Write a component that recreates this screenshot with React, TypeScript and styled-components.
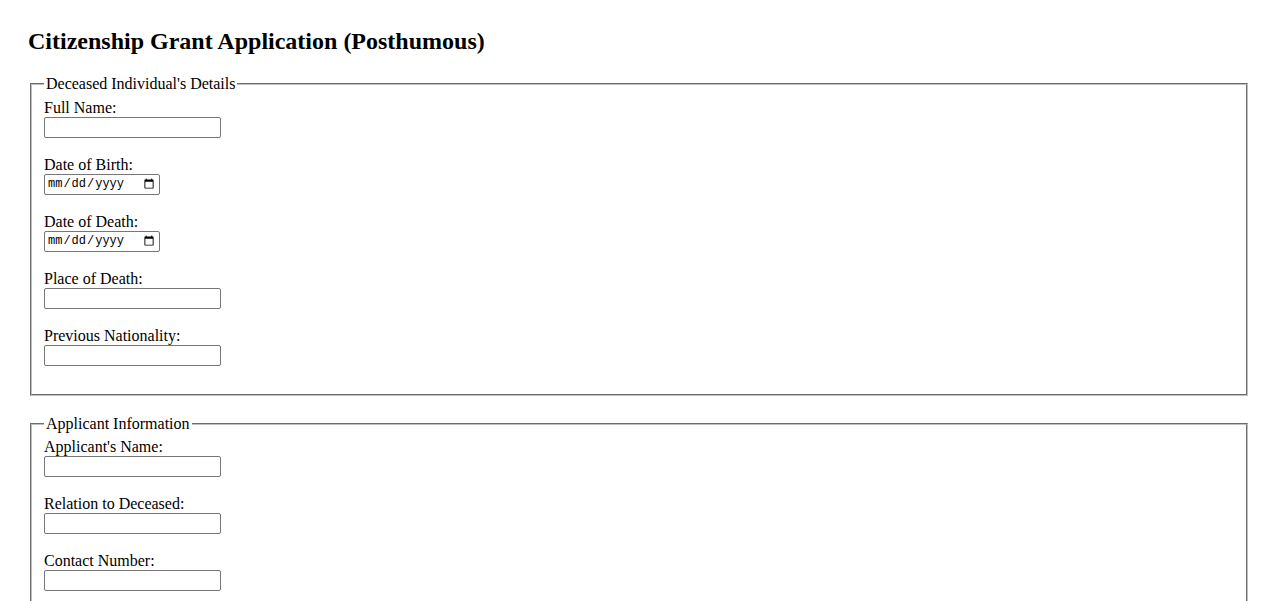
import React from 'react';
import styled, { createGlobalStyle } from 'styled-components';

const GlobalStyle = createGlobalStyle`
  html, body {
    margin: 0;
    padding: 0;
    background: #ffffff;
  }
  body {
    font-family: 'Liberation Serif', 'Times New Roman', serif;
    font-size: 16px;
    color: #000000;
  }
`;

interface Field {
  id: string;
  label: string;
  type: 'text' | 'date' | 'tel' | 'email';
}

const deceasedFields: Field[] = [
  { id: 'fullName', label: 'Full Name:', type: 'text' },
  { id: 'dob', label: 'Date of Birth:', type: 'date' },
  { id: 'dod', label: 'Date of Death:', type: 'date' },
  { id: 'placeOfDeath', label: 'Place of Death:', type: 'text' },
  { id: 'prevNationality', label: 'Previous Nationality:', type: 'text' },
];

const applicantFields: Field[] = [
  { id: 'applicantName', label: "Applicant's Name:", type: 'text' },
  { id: 'relation', label: 'Relation to Deceased:', type: 'text' },
  { id: 'contact', label: 'Contact Number:', type: 'tel' },
  { id: 'email', label: 'Email Address:', type: 'email' },
];

const App: React.FC = () => {
  return (
    <Page>
      <GlobalStyle />
      <Title>Citizenship Grant Application (Posthumous)</Title>
      <Form onSubmit={(e) => e.preventDefault()}>
        <Section>
          <Legend>Deceased Individual's Details</Legend>
          {deceasedFields.map((f) => (
            <FieldRow key={f.id}>
              <Label htmlFor={f.id}>{f.label}</Label>
              {f.type === 'date' ? <DateInput id={f.id} type="date" /> : <TextInput id={f.id} type={f.type} />}
            </FieldRow>
          ))}
        </Section>

        <Section>
          <Legend>Applicant Information</Legend>
          {applicantFields.map((f) => (
            <FieldRow key={f.id}>
              <Label htmlFor={f.id}>{f.label}</Label>
              <TextInput id={f.id} type={f.type} />
            </FieldRow>
          ))}
        </Section>

        <SubmitButton type="submit">Submit Application</SubmitButton>
      </Form>
    </Page>
  );
};

const Page = styled.div`
  padding: 28px 28px 20px 28px;
`;

const Title = styled.h2`
  margin: 0 0 19.92px 0;
  font-size: 24px;
  font-weight: 700;
  line-height: normal;
`;

const Form = styled.form`
  display: flex;
  flex-direction: column;
  gap: 19px;
  align-items: stretch;
`;

const Section = styled.fieldset`
  margin: 0 2px;
  padding: 5.6px 12px 10px 12px;
  border: 2px groove rgb(192, 192, 192);
  min-width: 0;
`;

const Legend = styled.legend`
  padding: 0 2px;
  font-size: 16px;
  line-height: normal;
`;

const FieldRow = styled.div`
  display: flex;
  flex-direction: column;
  align-items: flex-start;
  padding-bottom: 18px;
`;

const Label = styled.label`
  display: block;
  height: 18px;
  line-height: 18px;
  font-size: 16px;
`;

const baseInput = `
  box-sizing: border-box;
  height: 21px;
  margin: 0;
  border: 1px solid #767676;
  border-radius: 2px;
  background: #ffffff;
  color: #000000;
  outline: none;
`;

const TextInput = styled.input`
  ${baseInput}
  width: 177px;
  padding: 1px 2px;
  font-family: 'Liberation Sans', Arial, sans-serif;
  font-size: 13.33px;
`;

const DateInput = styled.input`
  ${baseInput}
  width: 116px;
  padding: 1px 2px;
  font-family: 'Liberation Mono', 'Courier New', monospace;
  font-size: 12px;
`;

const SubmitButton = styled.button`
  align-self: flex-start;
  margin-left: 2px;
  font-family: 'Liberation Sans', Arial, sans-serif;
  font-size: 13.33px;
  padding: 1px 6px;
`;

export default App;
